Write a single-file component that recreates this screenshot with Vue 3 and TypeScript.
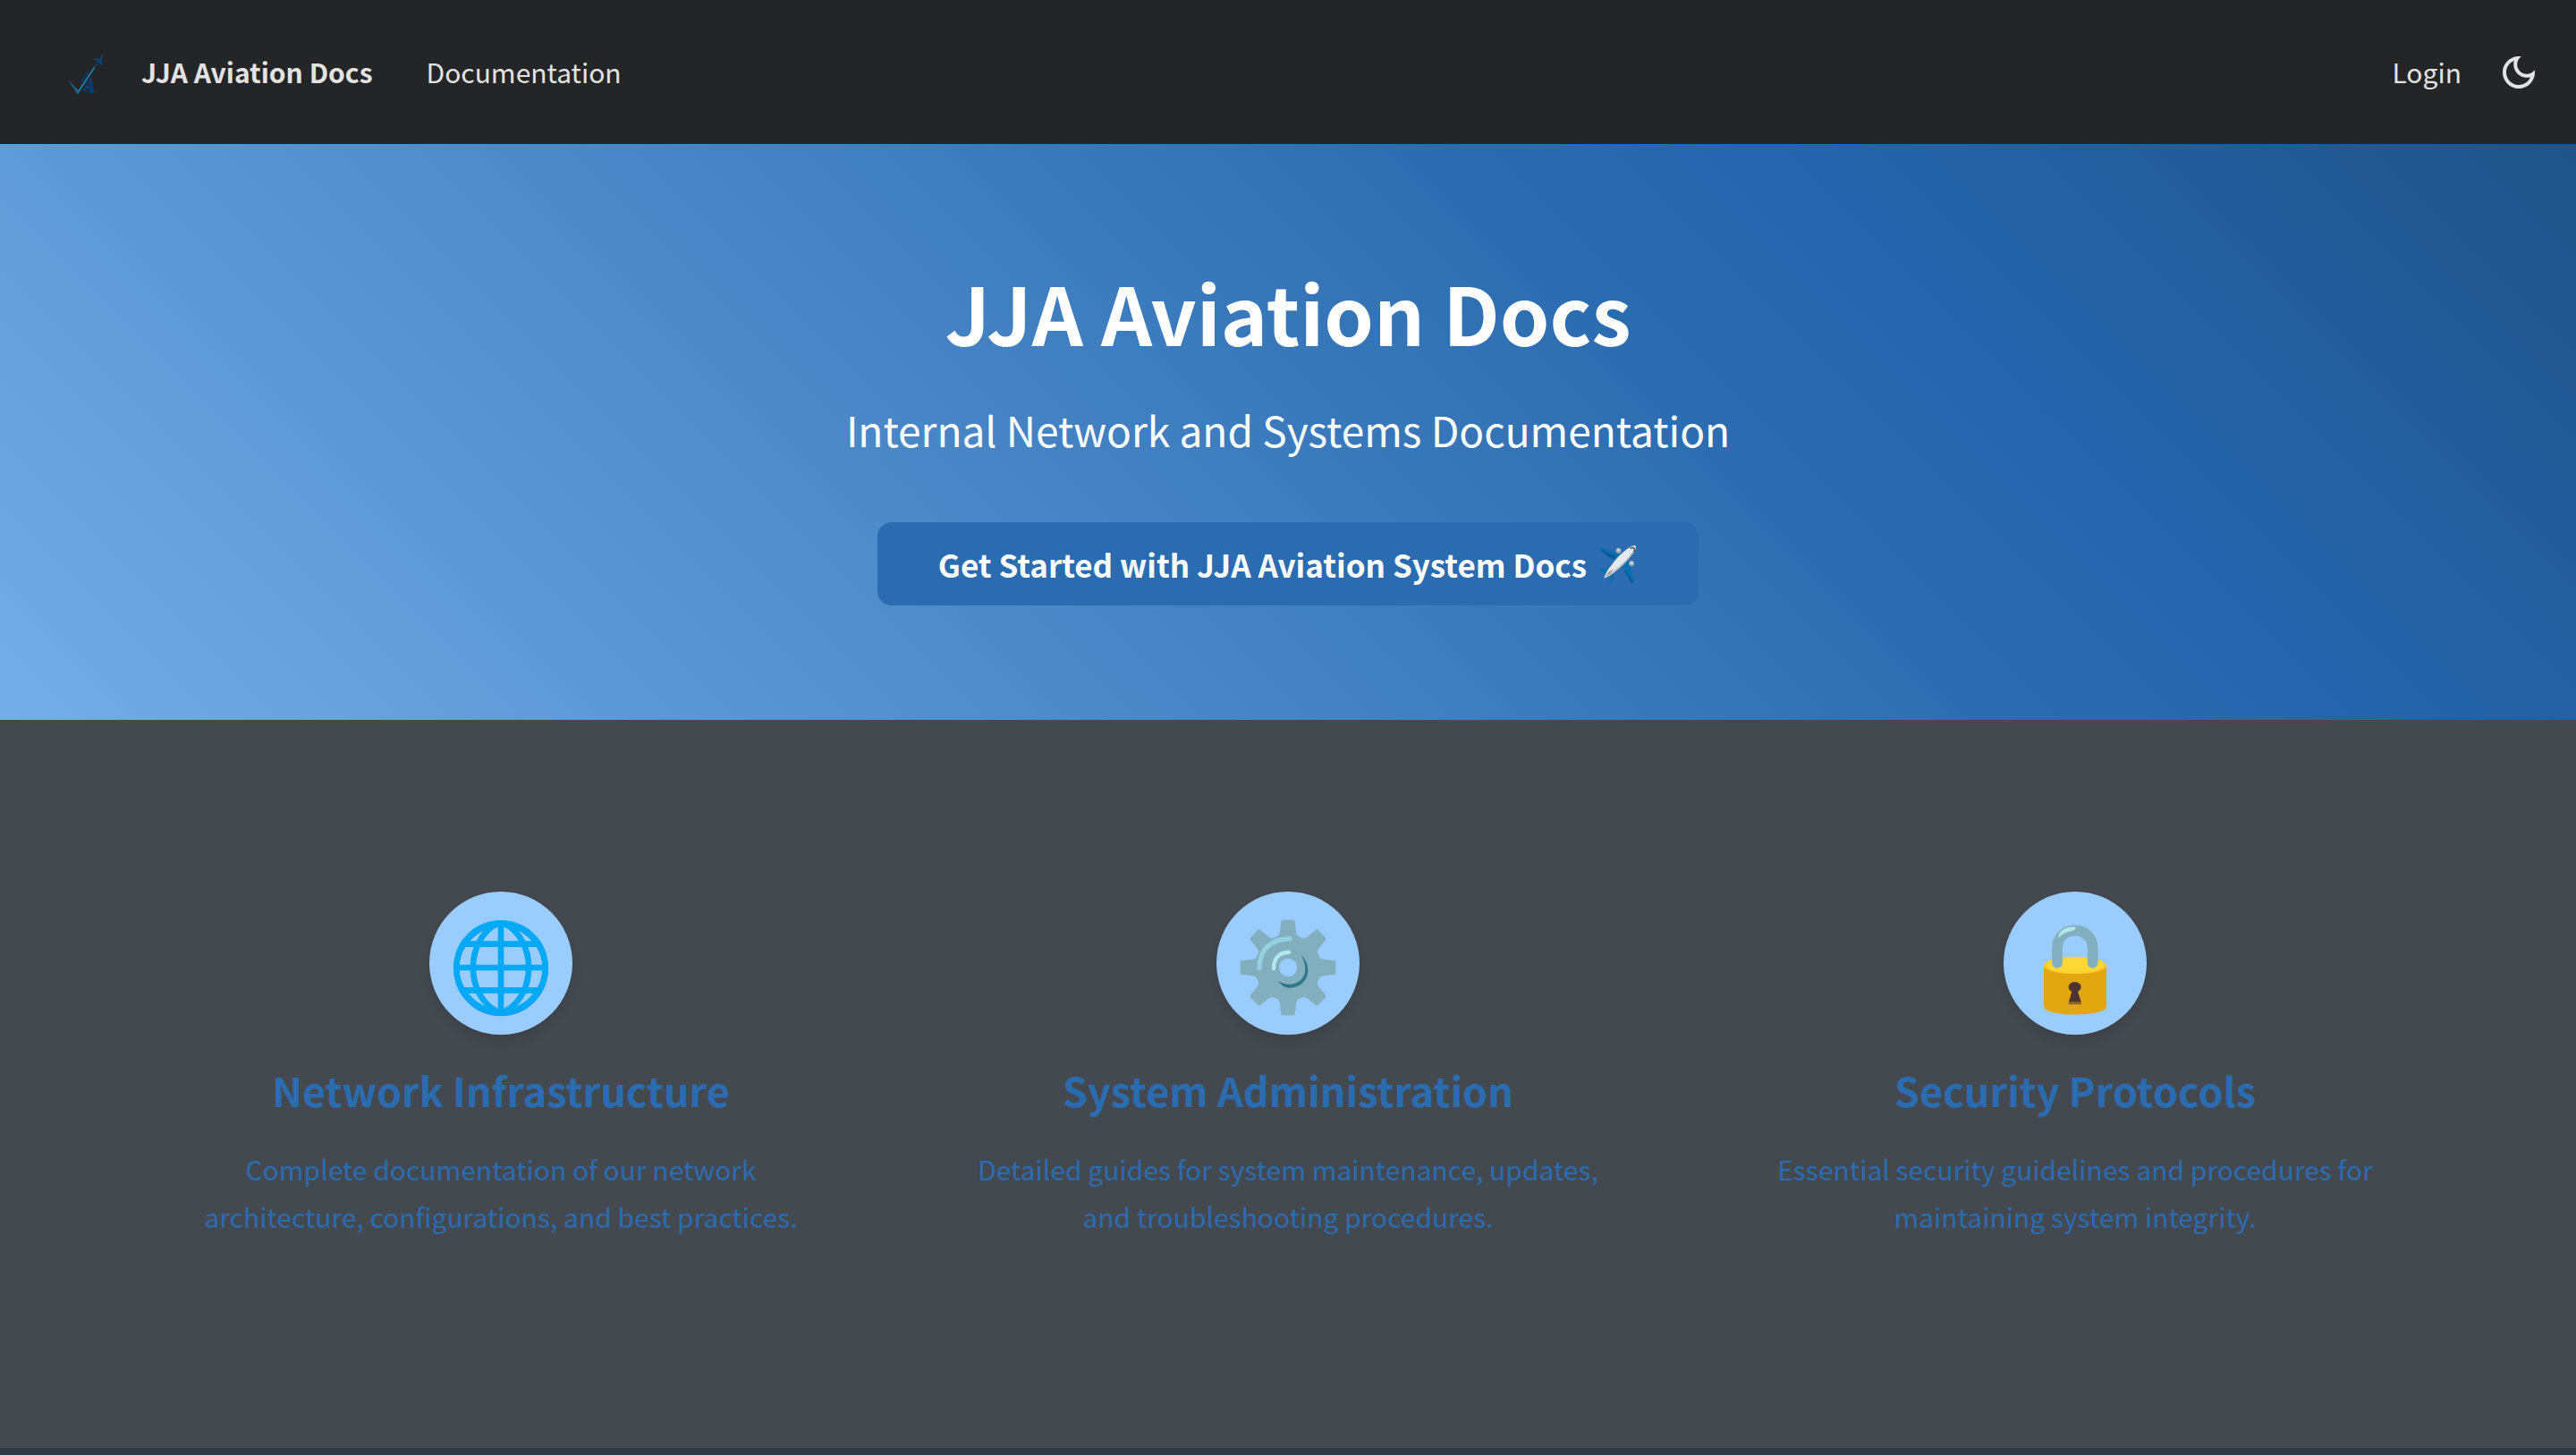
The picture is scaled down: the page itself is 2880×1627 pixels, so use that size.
<script setup lang="ts">
interface Feature {
  icon: 'globe' | 'gear' | 'lock'
  title: string
  text: string
}

const features: Feature[] = [
  {
    icon: 'globe',
    title: 'Network Infrastructure',
    text: 'Complete documentation of our network architecture, configurations, and best practices.',
  },
  {
    icon: 'gear',
    title: 'System Administration',
    text: 'Detailed guides for system maintenance, updates, and troubleshooting procedures.',
  },
  {
    icon: 'lock',
    title: 'Security Protocols',
    text: 'Essential security guidelines and procedures for maintaining system integrity.',
  },
]

const teeth = [0, 45, 90, 135, 180, 225, 270, 315]
</script>

<template>
  <div class="page">
    <header class="navbar">
      <nav class="nav-group" aria-label="Main">
        <a class="brand" href="#">
          <svg class="logo" viewBox="0 -15 240 210" aria-hidden="true">
            <path d="M112 160 L96 150 L127 103 L134 160 H121 L120 146 H106 Z M112 135 H120 L119 119 Z" fill="#0a3c70" fill-rule="evenodd" />
            <path d="M92 116 L119 82 L116 92 L92 126 Z" fill="#0a3c70" />
            <path d="M50 117 L82 151 L136 69 L138 76 L81 163 Z" fill="#1b7fa8" />
            <path d="M50 117 L82 151 L81 163 Z" fill="#13689a" />
            <path d="M137 72 L149 52 L133 46 L138 43 L154 45 L163 29 L167 30 L161 48 L163 64 L158 66 L153 55 L141 70 Z" fill="#0c4482" />
          </svg>
          <b>JJA Aviation Docs</b>
        </a>
        <a class="nav-link" href="#docs">Documentation</a>
      </nav>
      <div class="nav-group">
        <a class="nav-link" href="#login">Login</a>
        <button class="theme-toggle" type="button" aria-label="Switch colour mode">
          <svg viewBox="0 0 24 24" aria-hidden="true">
            <path fill="currentColor" d="M9.37,5.51c-0.18,0.64-0.27,1.31-0.27,1.99c0,4.08,3.32,7.4,7.4,7.4c0.68,0,1.35-0.09,1.99-0.27C17.45,17.19,14.93,19,12,19 c-3.86,0-7-3.14-7-7C5,9.07,6.81,6.55,9.37,5.51z M12,3c-4.97,0-9,4.03-9,9s4.03,9,9,9s9-4.03,9-9c0-0.46-0.04-0.92-0.1-1.36 c-0.98,1.37-2.58,2.26-4.4,2.26c-2.98,0-5.4-2.42-5.4-5.4c0-1.81,0.89-3.42,2.26-4.4C12.92,3.04,12.46,3,12,3L12,3z" />
          </svg>
        </button>
      </div>
    </header>

    <section class="hero">
      <h1>JJA Aviation Docs</h1>
      <p>Internal Network and Systems Documentation</p>
      <a class="cta" href="#docs">
        <span>Get Started with JJA Aviation System Docs</span>
        <svg class="plane" viewBox="80 48 136 144" aria-hidden="true">
          <path d="M84 67 L96 66 L158 86 L140 106 L120 96 Z" fill="#0a6fae" />
          <path d="M86 70 L128 101 L134 104 L142 92 Z" fill="#075a96" />
          <path d="M164 126 L184 106 L203 172 L202 184 L194 180 Z" fill="#0a6fae" />
          <path d="M164 128 L192 180 L202 184 L196 170 Z" fill="#075a96" />
          <path d="M83 134 L92 132 L119 139 L109 154 Z M119 184 L126 164 L136 151 L135 168 Z" fill="#0c6eab" />
          <circle cx="151" cy="74" r="9" fill="#9fadb5" />
          <circle cx="150" cy="72" r="4" fill="#d7dfe3" />
          <circle cx="195" cy="117" r="9" fill="#9fadb5" />
          <circle cx="196" cy="116" r="4" fill="#d7dfe3" />
          <path d="M102 167 Q108 145 128 122 Q150 90 178 70 Q198 54 209 57 Q214 66 198 84 Q178 112 148 137 Q122 160 102 167 Z" fill="#e4e8ea" />
          <path d="M102 167 Q130 150 150 130 Q186 100 209 60 Q214 68 198 86 Q178 114 148 139 Q122 161 102 167 Z" fill="#b4bfc5" />
          <path d="M104 163 L118 146 L134 136 L124 151 Z" fill="#9b9a94" />
          <path d="M189 66 Q199 61 204 66 Q208 72 203 78" fill="none" stroke="#4b5b66" stroke-width="5" />
        </svg>
      </a>
    </section>

    <main class="features">
      <div class="row">
        <article v-for="feature in features" :key="feature.title" class="feature">
          <div class="badge">
            <svg v-if="feature.icon === 'globe'" viewBox="60 50 480 480" aria-hidden="true">
              <g fill="none" stroke="#2196f3" stroke-width="19" transform="translate(0 4)">
                <circle cx="300" cy="305" r="149" />
              </g>
              <g fill="none" stroke="#03a9f4" stroke-width="20">
                <circle cx="300" cy="305" r="149" />
                <path d="M300 156 V452 M151 305 H449 M176 226 H424 M176 381 H424" />
                <path d="M286 158 C180 215 180 395 286 452 M314 158 C420 215 420 395 314 452" />
              </g>
            </svg>
            <svg v-else-if="feature.icon === 'gear'" viewBox="60 50 480 480" aria-hidden="true">
              <g fill="#82aebd">
                <path d="M300 195 A110 110 0 1 1 299 195 Z M300 275 A30 30 0 1 0 301 275 Z" fill-rule="evenodd" />
                <path
                  v-for="angle in teeth"
                  :key="angle"
                  d="M277 149 Q277 145 281 145 H319 Q323 145 323 149 L328 190 Q330 200 345 204 L330 225 H270 L255 204 Q270 200 272 190 Z"
                  :transform="`rotate(${angle} 300 305)`"
                />
              </g>
              <path d="M204 307 C204 242 244 210 306 208" fill="none" stroke="#94d1e0" stroke-width="16" stroke-linecap="round" />
              <path d="M252 308 C252 274 270 254 303 254" fill="none" stroke="#b0e8ec" stroke-width="13" stroke-linecap="round" />
              <path d="M343 262 C386 300 370 372 303 373 Q282 372 267 350 Q286 362 308 361 C360 356 370 306 343 262 Z" fill="#2f7889" />
            </svg>
            <svg v-else viewBox="60 50 480 480" aria-hidden="true">
              <path d="M195 300 H405 V435 C405 472 195 472 195 435 Z" fill="#e2a610" />
              <ellipse cx="300" cy="298" rx="105" ry="29" fill="#ffca28" />
              <ellipse cx="300" cy="296" rx="96" ry="25" fill="#fdd835" />
              <path d="M240 289 V240 C240 160 359 160 359 240 V289" fill="none" stroke="#82aebd" stroke-width="35" stroke-linecap="round" />
              <path d="M243 207 Q246 168 301 168 Q304 179 290 182 Q262 185 243 207 Z" fill="#b0e8ec" />
              <path d="M289 387 C268 374 278 353 299 353 C320 353 330 374 309 387 L321 419 V429 H278 V419 Z" fill="#8d6a2c" />
              <path d="M289 385 C270 374 280 354 299 354 C318 354 328 374 309 385 L319 420 H280 Z" fill="#4e342e" />
            </svg>
          </div>
          <h3>{{ feature.title }}</h3>
          <p>{{ feature.text }}</p>
        </article>
      </div>
    </main>

    <footer class="footer"></footer>
  </div>
</template>

<style>
body {
  margin: 0;
  background: #303846;
}
</style>

<style scoped>
.page {
  min-height: 100vh;
  display: flex;
  flex-direction: column;
  font-family: "Noto Sans CJK SC", "Noto Sans", sans-serif;
  font-size: 30px;
  line-height: 53px;
  color: #e3e3e3;
}

.page * {
  box-sizing: border-box;
}

a {
  color: inherit;
  text-decoration: none;
}

svg {
  display: block;
}

.navbar {
  display: flex;
  align-items: center;
  justify-content: space-between;
  height: 161px;
  padding: 0 32px;
  background: #242526;
}

.nav-group {
  display: flex;
  align-items: center;
}

.brand {
  display: flex;
  align-items: center;
  gap: 18px;
  margin: 0 28px;
}

.logo {
  width: 80px;
  height: 70px;
}

.nav-link {
  padding: 0 32px;
}

.theme-toggle {
  display: grid;
  place-items: center;
  width: 64px;
  height: 64px;
  padding: 0;
  border: 0;
  border-radius: 50%;
  background: none;
  color: inherit;
}

.theme-toggle svg {
  width: 48px;
  height: 48px;
}

.hero {
  display: flex;
  flex-direction: column;
  align-items: center;
  padding: 128px 32px;
  background: linear-gradient(45deg, #74ade8 0%, #2b6cb0 64%, #2565ae 74%, #205488 100%);
  color: #fff;
  text-align: center;
}

.hero h1 {
  margin: 0;
  font-size: 89px;
  line-height: 120px;
}

.hero p {
  margin: 32px 0 64px;
  font-size: 46px;
  line-height: 79px;
}

.cta {
  display: flex;
  align-items: center;
  gap: 12px;
  height: 93px;
  padding: 0 68px;
  border-radius: 16px;
  background: #2b6cb0;
  font-size: 35px;
  font-weight: 700;
}

.plane {
  width: 45px;
  height: 48px;
}

.features {
  flex: 1;
  padding: 128px 120px;
  background: #444950;
}

.row {
  display: grid;
  grid-template-columns: repeat(3, 1fr);
}

.feature {
  padding: 64px;
  color: #2b6cb0;
  text-align: center;
}

.badge {
  width: 160px;
  margin: 0 auto 32px;
  border-radius: 50%;
  background: #99ccff;
  box-shadow: 0 8px 12px rgba(0, 0, 0, 0.1);
}

.feature h3 {
  margin: 0 0 32px;
  font-size: 45px;
  line-height: 60px;
}

.feature p {
  margin: 0;
  padding: 0 16px;
}

.footer {
  flex: none;
  height: 8px;
  background: #303846;
}
</style>
